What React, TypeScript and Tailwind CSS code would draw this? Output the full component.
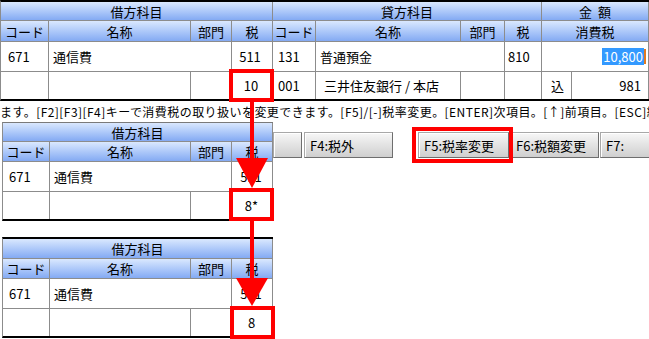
import { ReactElement, ReactNode } from 'react'

const hdr = 'bg-linear-to-b from-[#dae8fe] to-[#84aaf3]'
const ln = 'border-[#8c8c8c]'

const Cell = ({ w, children, cls = '' }: { w: string; children?: ReactNode; cls?: string }): ReactElement => (
    <div className={`${w} shrink-0 h-full border-r ${ln} flex items-center ${cls}`}>{children}</div>
)

// 借方科目 only (used by the two pop-ups)
const DebitTable = ({ top, h1, cell }: { top: string; h1: string; cell: ReactNode }): ReactElement => (
    <div className={`w-[271px] border-l ${ln} ${top} border-b-2 border-b-black bg-white`}>
        <div className={`flex ${h1} border-b ${ln} ${hdr}`}>
            <Cell w="w-[270px]" cls="justify-center">借方科目</Cell>
        </div>
        <div className={`flex h-[20px] border-b ${ln} ${hdr}`}>
            <Cell w="w-[47px]" cls="justify-center">コード</Cell>
            <Cell w="w-[141px]" cls="justify-center">名称</Cell>
            <Cell w="w-[41px]" cls="justify-center">部門</Cell>
            <Cell w="w-[41px]" cls="justify-center">税</Cell>
        </div>
        <div className={`flex h-[30px] border-b ${ln}`}>
            <Cell w="w-[47px]" cls="pl-[6px]">671</Cell>
            <Cell w="w-[182px]" cls="pl-[4px]">通信費</Cell>
            <Cell w="w-[41px]" cls="justify-center pr-[2px]">511</Cell>
        </div>
        <div className="flex h-[27px]">
            <Cell w="w-[47px]" />
            <Cell w="w-[141px]" />
            <Cell w="w-[41px]" />
            <Cell w="w-[41px]" cls="justify-center pr-[1px]">{cell}</Cell>
        </div>
    </div>
)

const Btn = ({ w, label, cls = '' }: { w: string; label: string; cls?: string }): ReactElement => (
    <div
        className={`${w} h-[26px] shrink-0 flex items-center pl-[5px] border border-[#a8a8a8] border-r-[#6e6e6e] border-b-[#6e6e6e] bg-linear-to-b from-[#f7f7f7] to-[#cfcfcf] shadow-[inset_1px_1px_0_#ffffff] ${cls}`}
    >
        {label}
    </div>
)

const App = (): ReactElement => {
    return (
        <div className="relative w-[649px] h-[339px] overflow-hidden bg-white text-[13px] leading-none text-black font-['Noto_Sans_CJK_JP',sans-serif]">
            {/* main entry grid */}
            <div className={`w-[649px] border-t-2 border-b-2 border-black border-l border-l-[#8c8c8c]`}>
                <div className={`flex h-[19px] border-b ${ln} ${hdr}`}>
                    <Cell w="w-[272px]" cls="justify-center">借方科目</Cell>
                    <Cell w="w-[269px]" cls="justify-center">貸方科目</Cell>
                    <Cell w="w-[107px]" cls="justify-center">金&nbsp;&nbsp;額</Cell>
                </div>
                <div className={`flex h-[21px] border-b ${ln} ${hdr}`}>
                    <Cell w="w-[48px]" cls="justify-center">コード</Cell>
                    <Cell w="w-[142px]" cls="justify-center">名称</Cell>
                    <Cell w="w-[41px]" cls="justify-center">部門</Cell>
                    <Cell w="w-[41px]" cls="justify-center">税</Cell>
                    <Cell w="w-[43px]" cls="justify-center">コード</Cell>
                    <Cell w="w-[145px]" cls="justify-center">名称</Cell>
                    <Cell w="w-[44px]" cls="justify-center">部門</Cell>
                    <Cell w="w-[37px]" cls="justify-center">税</Cell>
                    <Cell w="w-[107px]" cls="justify-center">消費税</Cell>
                </div>
                <div className={`flex h-[30px] border-b ${ln}`}>
                    <Cell w="w-[48px]" cls="pl-[7px]">671</Cell>
                    <Cell w="w-[183px]" cls="pl-[4px]">通信費</Cell>
                    <Cell w="w-[41px]" cls="justify-center pr-[4px]">511</Cell>
                    <Cell w="w-[43px]" cls="pl-[5px]">131</Cell>
                    <Cell w="w-[189px]" cls="pl-[4px]">普通預金</Cell>
                    <Cell w="w-[37px]" cls="pl-[3px]">810</Cell>
                    <Cell w="w-[107px]" cls="justify-end pr-[2px]">
                        <span className="bg-[#3399ff] text-white px-[1px] py-[2px]">10,800</span>
                        <span className="w-[2px] h-[15px] bg-[#e07a1f]" />
                    </Cell>
                </div>
                <div className="flex h-[27px]">
                    <Cell w="w-[48px]" />
                    <Cell w="w-[142px]" />
                    <Cell w="w-[41px]" />
                    <Cell w="w-[41px]" cls="justify-center pr-[2px]">10</Cell>
                    <Cell w="w-[43px]" cls="pl-[5px]">001</Cell>
                    <Cell w="w-[145px]" cls="pl-[8px]">三井住友銀行 / 本店</Cell>
                    <Cell w="w-[44px]" />
                    <Cell w="w-[37px]" />
                    <Cell w="w-[30px]" cls="justify-center pl-[2px]">込</Cell>
                    <Cell w="w-[77px]" cls="justify-end pr-[7px]">981</Cell>
                </div>
            </div>

            {/* guidance line */}
            <div className="w-[649px] h-[21px] flex items-center whitespace-nowrap overflow-hidden text-[12px] tracking-[0.45px]">
                <span className="shrink-0">
                    ます。[F2][F3][F4]キーで消費税の取り扱いを変更できます。[F5]/[-]税率変更。[ENTER]次項目。[↑]前項目。[ESC]終了。
                </span>
            </div>

            <div className="flex">
                <div className="w-[273px] shrink-0 pl-[2px]">
                    <DebitTable top="border-t border-t-[#7a7a7a]" h1="h-[19px]" cell="8*" />
                    <div className="mt-[16px]">
                        <DebitTable top="border-t-2 border-t-black" h1="h-[20px]" cell="8" />
                    </div>
                </div>
                <div className="flex pt-[10px]">
                    <Btn w="w-[29px]" label="" />
                    <Btn w="w-[89px]" label="F4:税外" cls="ml-[2px]" />
                    <div className="relative ml-[25px]">
                        <Btn w="w-[91px]" label="F5:税率変更" />
                        <div className="absolute -left-[6px] -top-[5px] w-[101px] h-[36px] border-4 border-[#ff0000]" />
                    </div>
                    <Btn w="w-[89px]" label="F6:税額変更" cls="ml-[1px]" />
                    <Btn w="w-[60px]" label="F7:" cls="ml-[1px]" />
                </div>
            </div>

            {/* annotations */}
            <div className="absolute left-[229px] top-[69px] w-[45px] h-[33px] border-4 border-[#ff0000]" />
            <div className="absolute left-[229px] top-[188px] w-[45px] h-[33px] border-4 border-[#ff0000]" />
            <div className="absolute left-[230px] top-[306px] w-[45px] h-[33px] border-4 border-[#ff0000]" />
            <svg className="absolute left-0 top-0 pointer-events-none" width="649" height="339">
                <rect x="250" y="101" width="4" height="58" fill="#ff0000" />
                <polygon points="236,158 268,158 252,188" fill="#ff0000" />
                <rect x="250" y="220" width="4" height="59" fill="#ff0000" />
                <polygon points="236,278 268,278 252,306" fill="#ff0000" />
            </svg>
        </div>
    )
}

export default App
